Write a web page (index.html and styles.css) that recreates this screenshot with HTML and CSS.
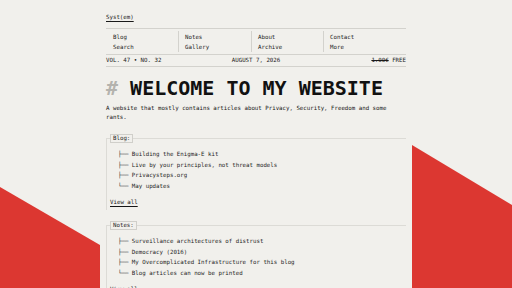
FILE: index.html
```html
<!DOCTYPE html>
<html lang="en">
<head>
    <meta charset="UTF-8">
    <meta name="viewport" content="width=device-width, initial-scale=1.0">
    <title>Syst(em)</title>
    <link rel="stylesheet" href="styles.css">
</head>
<body>
    <div class="page">
        <header class="masthead">
            <a href="#" class="brand">Syst(em)</a>
            <nav class="menu">
                <div class="menu-col">
                    <a href="#">Blog</a>
                    <a href="#">Search</a>
                </div>
                <div class="menu-col">
                    <a href="#">Notes</a>
                    <a href="#">Gallery</a>
                </div>
                <div class="menu-col">
                    <a href="#">About</a>
                    <a href="#">Archive</a>
                </div>
                <div class="menu-col">
                    <a href="#">Contact</a>
                    <a href="#">More</a>
                </div>
            </nav>
            <div class="meta">
                <span>VOL. 47 • NO. 32</span>
                <span class="meta-date">AUGUST 7, 2026</span>
                <span class="meta-price"><s>1.00€</s> FREE</span>
            </div>
        </header>
        <main>
            <h1 class="title"><span class="hash">#</span> WELCOME TO MY WEBSITE</h1>
            <p class="intro">A website that mostly contains articles about Privacy, Security, Freedom and some rants.</p>

            <fieldset class="section">
                <legend>Blog:</legend>
                <ul class="tree">
                    <li>├── Building the Enigma-E kit</li>
                    <li>├── Live by your principles, not threat models</li>
                    <li>├── Privacysteps.org</li>
                    <li>└── May updates</li>
                </ul>
                <a href="#" class="view-all">View all</a>
            </fieldset>

            <fieldset class="section notes">
                <legend>Notes:</legend>
                <ul class="tree">
                    <li>├── Surveillance architectures of distrust</li>
                    <li>├── Democracy (2016)</li>
                    <li>├── My Overcomplicated Infrastructure for this blog</li>
                    <li>└── Blog articles can now be printed</li>
                </ul>
                <a href="#" class="view-all">View all</a>
            </fieldset>
        </main>
    </div>
</body>
</html>
```

FILE: styles.css
```css
*{
    margin: 0;
    padding: 0;
    box-sizing: border-box;
}
html, body{
    height: 288px;
    overflow: hidden;
}
body{
    background: #f1f0ec;
    color: #151515;
    font-family: "DejaVu Sans Mono", "Liberation Mono", monospace;
    font-size: 5.75px;
    line-height: 10px;
}

/* red decorative shapes behind the page */
body::before,
body::after{
    content: "";
    position: fixed;
    width: 100px;
    height: 288px;
    background: #dc3731;
    z-index: 0;
}
body::before{
    left: 0;
    top: 0;
    clip-path: polygon(0 187px, 100px 245px, 100px 288px, 0 288px);
}
body::after{
    right: 0;
    top: 0;
    clip-path: polygon(0 145px, 100px 205px, 100px 288px, 0 288px);
}

a{
    color: inherit;
    text-decoration: none;
}

.page{
    position: relative;
    z-index: 1;
    width: 300px;
    margin: 0 auto;
    padding-top: 12px;
}

.brand{
    display: inline-block;
    color: #1a1a1a;
    text-decoration: underline;
    text-underline-offset: 1.5px;
}

.menu{
    margin-top: 6px;
    display: grid;
    grid-template-columns: 72px 73px 72px 1fr;
    padding: 2px 0;
    border-top: 1px solid #d3d2cd;
    border-bottom: 1px solid #d3d2cd;
}
.menu-col{
    display: flex;
    flex-direction: column;
    padding: 1px 0 0 6px;
    border-left: 1px solid #d3d2cd;
    color: #222;
}
.menu-col:first-child{
    border-left: none;
    padding-left: 7px;
}

.meta{
    display: grid;
    grid-template-columns: 1fr auto 1fr;
    line-height: 11px;
    border-bottom: 1px solid #d3d2cd;
    color: #1a1a1a;
}
.meta-price{
    text-align: right;
}

.title{
    margin-top: 9px;
    font-size: 20px;
    line-height: 24px;
    font-weight: bold;
    color: #111;
    white-space: nowrap;
}
.hash{
    color: #b4b3ae;
}

.intro{
    margin-top: 3.5px;
    line-height: 9px;
}

.section{
    margin-top: 12.5px;
    min-width: 0;
    border: none;
    border-top: 1px solid #dcdbd6;
    border-left: 1px solid #dcdbd6;
    padding: 0 0 3px 3px;
}
.section.notes{
    margin-top: 11px;
}
.section legend{
    padding: 0 2px;
    border: 1px solid #d0cfca;
    line-height: 7px;
    color: #222;
}

.tree{
    list-style: none;
    margin-top: 6px;
    padding-left: 8px;
    line-height: 10.5px;
    color: #1e1e1e;
    white-space: nowrap;
}

.view-all{
    display: inline-block;
    margin-top: 6px;
    text-decoration: underline;
    text-underline-offset: 1.5px;
}
```
